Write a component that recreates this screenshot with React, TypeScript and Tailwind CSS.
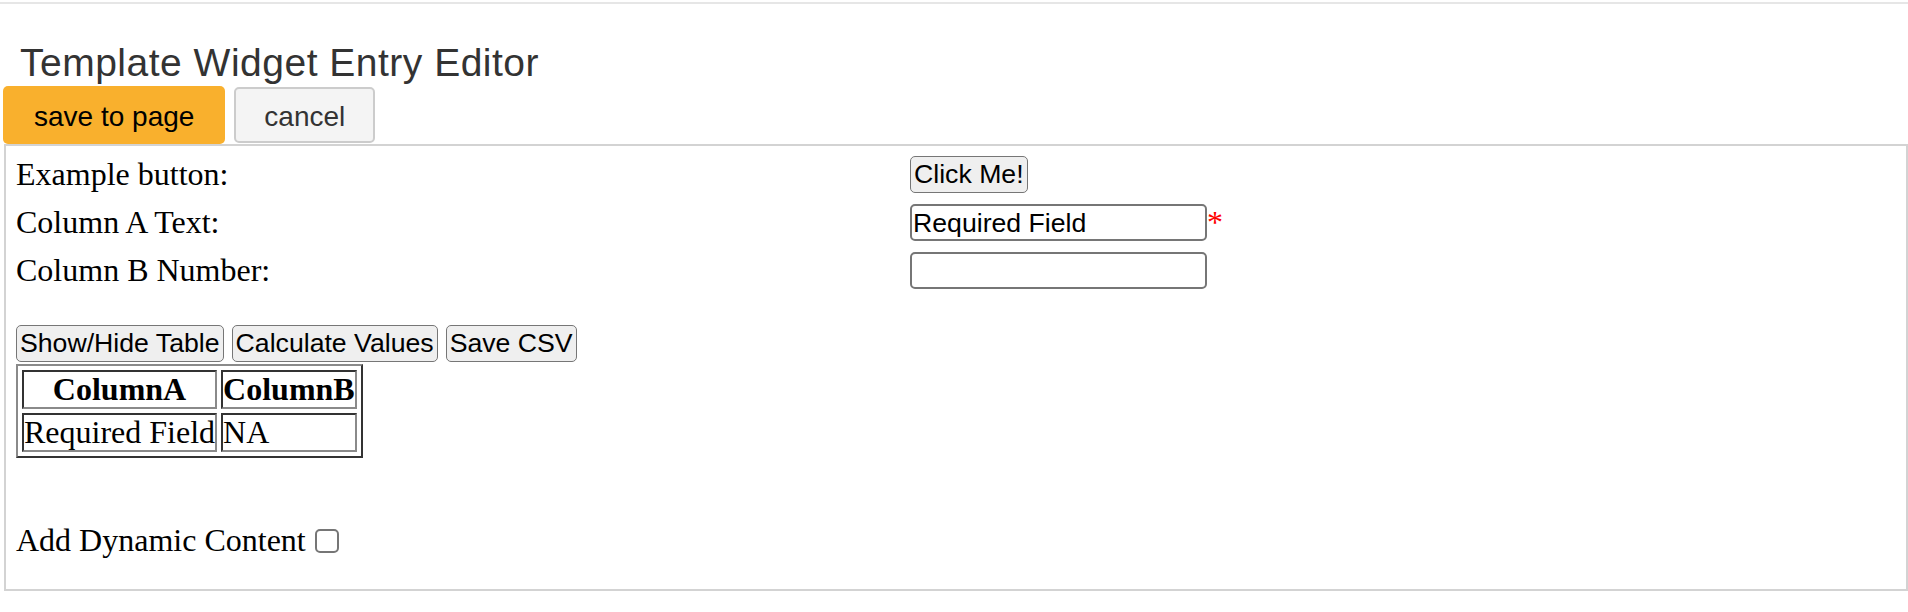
import React, { JSX } from "react";

const sans = "font-['Liberation_Sans',Arial,sans-serif]";
const serif = "font-['Liberation_Serif','Times_New_Roman',serif]";

const FormButton = ({ label }: { label: string }): JSX.Element => (
  <button
    className={`${sans} h-[37px] px-[3px] text-[26.67px] leading-none text-black bg-[#efefef] border-[1.5px] border-[#767676] rounded-[5px]`}
  >
    {label}
  </button>
);

export default function App(): JSX.Element {
  const rows = [
    ["ColumnA", "ColumnB"],
    ["Required Field", "NA"],
  ];

  return (
    <div className={`${serif} w-[1908px] h-[612px] bg-white text-black overflow-hidden`}>
      <div className="mt-[2px] border-t-2 border-[#e6e6e6]" />

      <h1 className={`${sans} pl-[20px] pt-[39px] text-[39px] leading-[39px] tracking-[0.5px] text-[#333] font-normal`}>
        Template Widget Entry Editor
      </h1>

      <div className="flex items-center gap-[9px] pl-[3px] mt-[4px] h-[58px]">
        <button className={`${sans} h-[58px] px-[31px] pt-[3px] text-[28px] text-black bg-[#f9b02d] rounded-[5px]`}>
          save to page
        </button>
        <button className={`${sans} h-[56px] px-[28px] pt-[3px] text-[28px] text-[#333] bg-[#f4f4f4] border-2 border-[#cccccc] rounded-[5px]`}>
          cancel
        </button>
      </div>

      <div className="ml-[4px] h-[447px] border-2 border-[#d3d3d3] pl-[9px] pt-[10px] text-[32px]">
        <div className="grid grid-cols-[895px_1fr] auto-rows-[37px] gap-y-[11px]">
          <div className="flex items-center pl-[1px] leading-[37px]">Example button:</div>
          <div className="flex items-center">
            <FormButton label="Click Me!" />
          </div>

          <div className="flex items-center pl-[1px] leading-[37px]">Column A Text:</div>
          <div className="flex items-center">
            <input
              type="text"
              defaultValue="Required Field"
              className={`${sans} w-[297px] h-[37px] px-[1px] text-[26.67px] text-black border-2 border-[#767676] rounded-[5px] outline-none`}
            />
            <span className="text-[#ff0000] leading-[37px]">*</span>
          </div>

          <div className="flex items-center pl-[1px] leading-[37px]">Column B Number:</div>
          <div className="flex items-center">
            <input
              type="text"
              className={`${sans} w-[297px] h-[37px] px-[1px] text-[26.67px] text-black border-2 border-[#767676] rounded-[5px] outline-none`}
            />
          </div>
        </div>

        <div className="flex items-center gap-[8px] mt-[36px] pl-[1px]">
          <FormButton label="Show/Hide Table" />
          <FormButton label="Calculate Values" />
          <FormButton label="Save CSV" />
        </div>

        <table className="mt-[2px] ml-[1px] border-separate border-spacing-[4px] border-2 border-t-[#8a8a8a] border-l-[#8a8a8a] border-b-[#333] border-r-[#333]">
          <tbody>
            {rows.map((row, r) => (
              <tr key={r}>
                {row.map((cell, c) =>
                  r === 0 ? (
                    <th
                      key={c}
                      className="px-0 py-[2px] leading-[31px] font-bold text-center border-2 border-t-[#333] border-l-[#333] border-b-[#8a8a8a] border-r-[#8a8a8a]"
                    >
                      {cell}
                    </th>
                  ) : (
                    <td
                      key={c}
                      className="px-0 py-[2px] leading-[31px] text-left border-2 border-t-[#333] border-l-[#333] border-b-[#8a8a8a] border-r-[#8a8a8a]"
                    >
                      {cell}
                    </td>
                  )
                )}
              </tr>
            ))}
          </tbody>
        </table>

        <div className="flex items-center gap-[9px] mt-[64px] h-[37px] pl-[1px] leading-[37px]">
          <span>Add Dynamic Content</span>
          <input
            type="checkbox"
            className="appearance-none w-[24px] h-[24px] bg-white border-2 border-[#767676] rounded-[5px]"
          />
        </div>
      </div>
    </div>
  );
}
